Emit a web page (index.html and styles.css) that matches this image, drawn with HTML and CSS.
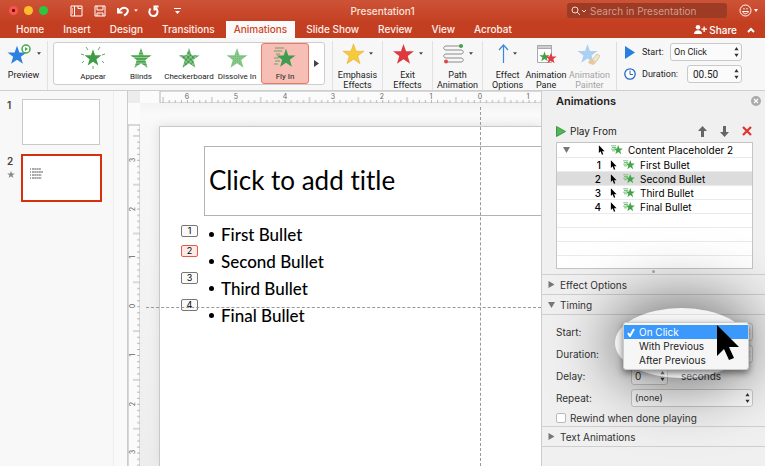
FILE: index.html
```html
<!DOCTYPE html>
<html lang="en">
<head>
<meta charset="utf-8">
<title>Presentation1</title>
<link rel="stylesheet" href="styles.css">
</head>
<body>
<svg class="defs" aria-hidden="true">
  <defs>
    <pattern id="stripes" width="24" height="3" patternUnits="userSpaceOnUse"><rect width="24" height="2" fill="#48a54c"/></pattern>
    <pattern id="checks" width="5" height="5" patternUnits="userSpaceOnUse"><rect width="5" height="5" fill="#8fc892"/><path d="M0 0h2.5v2.5H0zM2.5 2.5H5V5H2.5z" fill="#3c9a43"/></pattern>
    <pattern id="dots" width="2" height="2" patternUnits="userSpaceOnUse"><rect width="2" height="2" fill="#8ccb8f"/><path d="M0 0h1v1H0z" fill="#62b267"/></pattern>
    <symbol id="star" viewBox="0 0 24 24"><path d="M12 1l2.8 8h8.6l-6.8 5.200 2.500 8.300-7.100-4.900-7.100 4.900 2.500-8.300L.6 9h8.600z"/></symbol>
    <symbol id="updown" viewBox="0 0 6 14"><path d="M3 1l2.500 4h-5zM3 13L.5 9h5z"/></symbol>
    <symbol id="caret" viewBox="0 0 6 4"><path d="M0 0h6L3 4z"/></symbol>
    <symbol id="pointer" viewBox="0 0 8 11"><path d="M1 0v9l2-2 1.500 4L6 10.300 4.600 7H7.500z"/></symbol>
    <symbol id="fly" viewBox="0 0 14 12"><path d="M8.500 0l1.500 4.200h4l-3.200 2.600 1.200 4.200L8.500 8.500 5 11l1.200-4.200L3 4.200h4z"/><path d="M0 1h6M1 3h5M0 5h4M1 7h4" stroke="#79c07d" stroke-width="1.200" fill="none"/></symbol>
  </defs>
</svg>

<header class="top">
  <div class="titlebar">
    <div class="lights">
      <button class="light red" aria-label="Close"></button>
      <button class="light yellow" aria-label="Minimize"></button>
      <button class="light green" aria-label="Zoom"></button>
    </div>
    <div class="quick">
      <button aria-label="Layout"><svg width="13" height="12" viewBox="0 0 13 12"><path d="M1 1h11v10H1zM4.500 1v10M8 1v2.500h3.500M2 4h1M2 6h1M2 8h1"/></svg></button>
      <button aria-label="Save"><svg width="12" height="12" viewBox="0 0 12 12"><path d="M1 1h10v10H1zM3 1v4h6V1M3 11V8h6v3M4.500 10h1"/></svg></button>
      <button aria-label="Undo"><svg width="12" height="12" viewBox="0 0 12 12"><path class="thick" d="M1 3v4.500h4.500M1.500 7C4 3 7 2 9.500 3.500s1.500 5-2.500 7"/></svg></button>
      <button class="undo-more" aria-label="Undo options"><svg class="solid" width="4" height="3" viewBox="0 0 6 4"><use href="#caret"/></svg></button>
      <button aria-label="Repeat"><svg width="11" height="12" viewBox="0 0 11 12"><path class="thick" d="M2.500 3.500C0 7 2 11 5.500 11S11 6.500 8 3M10.500 1.500H6.500v4"/></svg></button>
      <button class="customize" aria-label="Customize toolbar"><svg class="solid" width="7" height="8" viewBox="0 0 7 8"><path d="M0 1h7v1H0zM1 4h5L3.500 7z"/></svg></button>
    </div>
    <h1>Presentation1</h1>
    <div class="title-right">
      <label class="search">
        <svg width="16" height="10" viewBox="0 0 16 10"><circle cx="4" cy="4" r="3"/><path d="M6.200 6.200L9 9M11 4l2 2 2-2"/></svg>
        <input type="text" placeholder="Search in Presentation" aria-label="Search in Presentation">
      </label>
      <button class="smile" aria-label="Feedback"><svg width="20" height="13" viewBox="0 0 20 13"><circle cx="6.500" cy="6.500" r="5.500"/><path d="M3.500 7.500c1 3 5 3 6 0zM5 4v1.500M8 4v1.500"/><path class="fillw" d="M15 5h4l-2 3z"/></svg></button>
    </div>
  </div>
  <nav class="tabs">
    <a href="#">Home</a><a href="#">Insert</a><a href="#">Design</a><a href="#">Transitions</a><a href="#" class="active">Animations</a><a href="#">Slide Show</a><a href="#">Review</a><a href="#">View</a><a href="#">Acrobat</a>
    <div class="share">
      <button><svg width="13" height="9" viewBox="0 0 13 9"><circle cx="4" cy="2.300" r="2.300"/><path d="M0 9c0-5 8-5 8 0zM9.500 1.500h1.300v2H13v1.300h-2.200v2.200H9.500V4.800H7.500V3.500h2z"/></svg>Share</button>
      <button aria-label="Collapse ribbon"><svg class="chev" width="8" height="6" viewBox="0 0 8 6"><path d="M1 5l3-3 3 3"/></svg></button>
    </div>
  </nav>
</header>

<section class="ribbon">
  <div class="group preview">
    <button class="tool">
      <span class="pic"><svg width="26" height="22" viewBox="0 0 26 22"><use href="#star" x="0" y="2" width="20" height="20" fill="#2c80df"/><circle cx="19" cy="6" r="4" fill="#fff" stroke="#45a845" stroke-width="1.500"/><path d="M18 4l3 2-3 2z" fill="#45a845"/></svg><svg class="dd" width="4" height="3"><use href="#caret"/></svg></span>
      <span>Preview</span>
    </button>
  </div>
  <div class="gallery">
    <div class="effects">
      <button class="effect"><svg width="24" height="24" viewBox="0 0 24 24"><use href="#star" x="3" y="2" width="18" height="19" fill="#3f9c46"/><path d="M7 4L5 1M17 4l2-3M3 9L0 8M21 9l3-1M3 15l-2 2M21 15l2 2M12 20v3" stroke="#58ad5d" fill="none"/></svg>Appear</button>
      <button class="effect"><svg width="22" height="24" viewBox="0 0 22 24"><use href="#star" x="0" y="1" width="22" height="22" fill="#9bce9e"/><use href="#star" x="0" y="1" width="22" height="22" fill="url(#stripes)"/></svg>Blinds</button>
      <button class="effect"><svg width="22" height="24" viewBox="0 0 22 24"><use href="#star" x="0" y="1" width="22" height="22" fill="url(#checks)"/></svg>Checkerboard</button>
      <button class="effect"><svg width="22" height="24" viewBox="0 0 22 24"><use href="#star" x="0" y="1" width="22" height="22" fill="url(#dots)"/></svg>Dissolve In</button>
      <button class="effect chosen"><svg width="22" height="24" viewBox="0 0 22 24"><use href="#star" x="2" y="1" width="20" height="22" fill="#3f9c50"/><path d="M1 2h9M0 5h8M2 8h4M0 12h5M1 15h5M0 18h4" stroke="#6f9f68" fill="none"/></svg>Fly In</button>
    </div>
    <button class="more" aria-label="More effects"><svg width="5" height="7" viewBox="0 0 5 7"><path d="M0 0l5 3.500L0 7z"/></svg></button>
  </div>
  <div class="group">
    <button class="tool"><span class="pic"><svg width="23" height="22" viewBox="0 0 24 24"><use href="#star" fill="#f7ca3c" stroke="#dfac27" stroke-width=".6"/></svg><svg class="dd" width="4" height="3"><use href="#caret"/></svg></span><span>Emphasis<br>Effects</span></button>
  </div>
  <div class="group">
    <button class="tool"><span class="pic"><svg width="23" height="22" viewBox="0 0 24 24"><use href="#star" fill="#dd3a3f"/></svg><svg class="dd" width="4" height="3"><use href="#caret"/></svg></span><span>Exit<br>Effects</span></button>
  </div>
  <div class="group">
    <button class="tool"><span class="pic"><svg width="22" height="20" viewBox="0 0 22 20"><path d="M18 2H3c-3 0-3 4 0 4h15c3 0 3 4 0 4H3c-3 0-3 4 0 4h15c3 0 3 4 0 4H3" fill="none" stroke="#8b8b8b"/><circle cx="18" cy="2" r="2" fill="#43a047"/><circle cx="3" cy="17.500" r="2" fill="#e04848"/></svg><svg class="dd" width="4" height="3"><use href="#caret"/></svg></span><span>Path<br>Animation</span></button>
  </div>
  <div class="group triple">
    <button class="tool"><span class="pic"><svg width="11" height="20" viewBox="0 0 11 20"><path d="M5.500 19V1M1 6l4.500-5L10 6" fill="none" stroke="#3b87dd" stroke-width="1.200"/></svg><svg class="dd" width="4" height="3"><use href="#caret"/></svg></span><span>Effect<br>Options</span></button>
    <button class="tool"><span class="pic"><svg width="21" height="22" viewBox="0 0 21 22"><path d="M1.500 2.500h14v17h-14z" fill="#fff" stroke="#aaa"/><path d="M1.500 2.500h14v3h-14z" fill="#ccc" stroke="#aaa"/><use href="#star" x="3" y="8" width="11" height="11" fill="#43a047"/><use href="#star" x="9" y="9" width="12" height="12" fill="#df3c43"/></svg></span><span>Animation<br>Pane</span></button>
    <button class="tool" disabled><span class="pic"><svg width="24" height="22" viewBox="0 0 24 22"><use href="#star" x="0" y="0" width="21" height="21" fill="#acd0f2"/><path d="M15 17l5-6 3 2-4 6z" fill="#f3e6cc" stroke="#d5c8b0"/><path d="M13 16l6 4-3 2-5-2z" fill="#e9c89a"/></svg></span><span>Animation<br>Painter</span></button>
  </div>
  <form class="timing-mini">
    <label for="rstart"><svg width="12" height="13" viewBox="0 0 12 13"><path d="M1 0l10 6.500L1 13z" fill="#287fe0"/></svg>Start:</label>
    <span class="pick wide"><select id="rstart"><option>On Click</option></select><svg class="ud" width="5" height="12"><use href="#updown"/></svg></span>
    <label for="rdur"><svg width="12" height="12" viewBox="0 0 12 12"><circle cx="6" cy="6" r="5.200" fill="#fff" stroke="#246bb9" stroke-width="1.300"/><path d="M6 2.500V6.500h3" fill="none" stroke="#246bb9"/></svg>Duration:</label>
    <span class="pick spin"><input id="rdur" type="text" value="00.50"><svg class="ud" width="5" height="12"><use href="#updown"/></svg></span>
  </form>
</section>

<main class="work">
  <aside class="thumbs">
    <ol>
      <li><span class="num">1</span><button class="thumb" aria-label="Slide 1"></button></li>
      <li><span class="num">2<svg width="8" height="9" viewBox="0 0 24 24"><use href="#star"/></svg></span><button class="thumb current" aria-label="Slide 2"><svg width="14" height="14" viewBox="0 0 14 14"><path d="M2 2h9M2 5h11M2 8h9.500M2 11h9.500"/><path class="b" d="M0 2h1M0 5h1M0 8h1M0 11h1"/></svg></button></li>
    </ol>
  </aside>

  <section class="editor">
    <div class="corner"></div>
    <svg class="ruler-h" role="img" aria-label="Horizontal ruler">
      <defs><pattern id="th" x="47" width="48.800" height="12" patternUnits="userSpaceOnUse"><path d="M.5 9v3M6.600 9v3M12.700 9v3M18.800 9v3M24.900 6v6M31 9v3M37.100 9v3M43.200 9v3"/></pattern></defs>
      <rect x="20" width="100%" height="12" fill="url(#th)"/>
      <g><text x="47" y="8">6</text><text x="96" y="8">5</text><text x="145" y="8">4</text><text x="193" y="8">3</text><text x="242" y="8">2</text><text x="291" y="8">1</text><text x="340" y="8">0</text><text x="388" y="8">1</text></g>
    </svg>
    <svg class="ruler-v" role="img" aria-label="Vertical ruler">
      <defs><pattern id="tv" y="8" width="12" height="48.800" patternUnits="userSpaceOnUse"><path d="M9 .5h3M9 6.600h3M9 12.700h3M9 18.800h3M5 24.900h7M9 31h3M9 37.100h3M9 43.200h3"/></pattern></defs>
      <rect y="22" width="12" height="100%" fill="url(#tv)"/>
      <g><text transform="translate(7 57) rotate(-90)">3</text><text transform="translate(7 106) rotate(-90)">2</text><text transform="translate(7 154) rotate(-90)">1</text><text transform="translate(7 203) rotate(-90)">0</text><text transform="translate(7 252) rotate(-90)">1</text><text transform="translate(7 301) rotate(-90)">2</text><text transform="translate(7 349) rotate(-90)">3</text></g>
    </svg>
    <div class="canvas">
      <article class="slide">
        <h2>Click to add title</h2>
        <div class="body">
          <ol class="tags"><li>1</li><li class="on">2</li><li>3</li><li>4</li></ol>
          <ul class="bullets"><li>First Bullet</li><li>Second Bullet</li><li>Third Bullet</li><li>Final Bullet</li></ul>
        </div>
      </article>
      <div class="guide-h"></div>
      <div class="guide-v"></div>
    </div>
  </section>

  <aside class="pane">
    <div class="pane-head"><h2>Animations</h2><button aria-label="Close pane"><svg width="10" height="10" viewBox="0 0 10 10"><circle cx="5" cy="5" r="5" fill="#aaa"/><path d="M3 3l4 4M7 3L3 7" stroke="#fff" stroke-width="1.200"/></svg></button></div>
    <div class="play">
      <button><svg width="10" height="11" viewBox="0 0 10 11"><path d="M.5.5l9 5-9 5z" fill="#55b558" stroke="#3a9a40"/></svg>Play From</button>
      <div class="acts">
        <button aria-label="Move up"><svg width="9" height="11" viewBox="0 0 9 11"><path d="M4.500 0L9 5H6v6H3V5H0z" fill="#666"/></svg></button>
        <button aria-label="Move down"><svg width="9" height="11" viewBox="0 0 9 11"><path d="M4.500 11L9 6H6V0H3v6H0z" fill="#666"/></svg></button>
        <button aria-label="Delete"><svg width="10" height="10" viewBox="0 0 10 10"><path d="M1 1l8 8M9 1L1 9" stroke="#dc3430" stroke-width="2.200"/></svg></button>
      </div>
    </div>
    <ul class="tree">
      <li class="parent"><svg class="tri" width="7" height="6" viewBox="0 0 7 6"><path d="M0 0h7L3.500 6z"/></svg><svg class="ptr" width="7" height="10"><use href="#pointer"/></svg><svg class="fly" width="12" height="10"><use href="#fly"/></svg>Content Placeholder 2</li>
      <li><b>1</b><svg class="ptr" width="7" height="10"><use href="#pointer"/></svg><svg class="fly" width="12" height="10"><use href="#fly"/></svg>First Bullet</li>
      <li class="sel"><b>2</b><svg class="ptr" width="7" height="10"><use href="#pointer"/></svg><svg class="fly" width="12" height="10"><use href="#fly"/></svg>Second Bullet</li>
      <li><b>3</b><svg class="ptr" width="7" height="10"><use href="#pointer"/></svg><svg class="fly" width="12" height="10"><use href="#fly"/></svg>Third Bullet</li>
      <li><b>4</b><svg class="ptr" width="7" height="10"><use href="#pointer"/></svg><svg class="fly" width="12" height="10"><use href="#fly"/></svg>Final Bullet</li>
      <li></li><li></li><li></li><li></li>
    </ul>
    <div class="grip"></div>
    <button class="section"><svg width="6" height="7" viewBox="0 0 6 7"><path d="M0 0l6 3.500L0 7z"/></svg>Effect Options</button>
    <button class="section"><svg width="7" height="6" viewBox="0 0 7 6"><path d="M0 0h7L3.500 6z"/></svg>Timing</button>
    <form class="fields">
      <label for="start">Start:</label>
      <div class="cell">
        <span class="pick"><select id="start"><option>On Click</option></select><svg class="ud" width="5" height="12"><use href="#updown"/></svg></span>
        <div class="spot"></div>
        <ul class="menu" role="listbox">
          <li role="option" aria-selected="true"><svg width="8" height="9" viewBox="0 0 8 9"><path d="M1 5l2 3 4-7"/></svg>On Click</li>
          <li role="option">With Previous</li>
          <li role="option">After Previous</li>
        </ul>
        <svg class="cursor" width="24" height="38" viewBox="0 0 24 38"><path d="M1 1v31l7-7 5 11 5-2-5-11h10z"/></svg>
      </div>
      <label for="dur">Duration:</label>
      <div class="cell"><span class="pick"><select id="dur"><option>0.5 seconds (Fast)</option></select><svg class="ud" width="5" height="12"><use href="#updown"/></svg></span></div>
      <label for="delay">Delay:</label>
      <div class="cell"><span class="pick small"><input id="delay" type="text" value="0"><svg class="ud" width="5" height="12"><use href="#updown"/></svg></span><span>seconds</span></div>
      <label for="repeat">Repeat:</label>
      <div class="cell"><span class="pick none"><select id="repeat"><option>(none)</option></select><svg class="ud" width="5" height="12"><use href="#updown"/></svg></span></div>
      <label class="rewind"><input type="checkbox">Rewind when done playing</label>
    </form>
    <button class="section last"><svg width="6" height="7" viewBox="0 0 6 7"><path d="M0 0l6 3.500L0 7z"/></svg>Text Animations</button>
  </aside>
</main>
</body>
</html>
```
FILE: styles.css
```css
* { box-sizing: border-box; }
body {
  margin: 0;
  height: 100vh;
  display: flex;
  flex-direction: column;
  overflow: hidden;
  background: #f0f0f0;
  color: #222;
  font: 10px/14px Inter, "Liberation Sans", sans-serif;
}
h1, h2, ul, ol { margin: 0; padding: 0; font-weight: inherit; }
ul, ol { list-style: none; }
button, input, select { font: inherit; color: inherit; }
button { display: flex; align-items: center; border: 0; padding: 0; background: none; white-space: nowrap; }
svg { flex: none; display: block; }
.defs { position: absolute; width: 0; height: 0; }

/* Title bar and tabs */
.top { flex: none; background: linear-gradient(#cd5337, #c43f22 60%, #c23e21); color: #fff; }
.titlebar { height: 21px; display: grid; grid-template-columns: 1fr auto 1fr; align-items: center; grid-template-areas: "left title right"; }
.lights, .quick { grid-area: left; display: flex; align-items: center; }
.lights { padding-left: 9px; gap: 6px; }
.light { width: 9px; height: 9px; border-radius: 50%; }
.red { background: radial-gradient(circle, #5b0b0b 1px, #fa544e 2px); }
.yellow { background: #fdbb2e; }
.green { background: #2bc740; }
.quick { padding-left: 70px; gap: 11px; }
.quick svg { fill: none; stroke: #fff; }
.quick .thick { stroke-width: 2; }
.quick .solid { fill: #fff; stroke: none; }
.undo-more { margin: 0 -1px 0 -6px; }
.customize { margin-left: 4px; }
.titlebar h1 { grid-area: title; font-size: 10px; font-weight: 500; color: #fbe3dc; }
.title-right { grid-area: right; display: flex; justify-content: flex-end; align-items: center; gap: 12px; padding: 0 6px 0 0; }
.search { flex: 0 1 160px; height: 15px; display: flex; align-items: center; gap: 3px; padding: 0 4px; border-radius: 3px; background: #9d3b24; }
.search svg { fill: none; stroke: #f8dcd4; }
.search input { min-width: 0; width: 100%; border: 0; padding: 0; background: none; outline: 0; }
.search input::placeholder { color: #d49a8b; opacity: 1; }
.smile svg { fill: none; stroke: #fff; }
.smile .fillw { fill: #fff; stroke: none; }
.tabs { display: flex; height: 17px; padding-left: 7px; font-weight: 500; }
.tabs a { margin: 0 2px 0 1px; padding: 0 8px; line-height: 16px; color: #fdeee9; text-decoration: none; white-space: nowrap; }
.tabs .active { background: #fafafa; color: #cc4524; }
.share { margin-left: auto; display: flex; gap: 10px; padding-right: 10px; }
.share svg { fill: #fff; margin-right: 2px; }
.share .chev { fill: none; stroke: #fff; stroke-width: 2; margin: 0; }

/* Ribbon */
.ribbon { flex: none; display: flex; height: 53px; padding: 4px 0 0; background: #f7f7f7; border-bottom: 1px solid #cfcfcf; font: 9px/10px Roboto, sans-serif; }
.group { flex: 0 0 50px; display: flex; justify-content: center; margin: -1px 0 0; border-left: 1px solid #e1e1e1; }
.group.preview { flex-basis: 48px; border: 0; border-right: 1px solid #e1e1e1; }
.group.triple { flex-basis: 134px; justify-content: space-between; padding: 0 6px 0 9px; }
.tool { flex-direction: column; color: #222; }
.tool:disabled { color: #a3a3a3; }
.pic { height: 25px; display: flex; align-items: center; justify-content: center; gap: 4px; margin-bottom: 4px; }
.pic .dd { fill: #444; }
.gallery { flex: 0 0 272px; height: 43px; display: flex; margin: 0 7px 0 5px; border: 1px solid #cdcdcd; border-radius: 3px; background: #fff; }
.effects { flex: 1; display: flex; padding-left: 15px; }
.effect { flex: 0 0 48px; min-width: 0; flex-direction: column; justify-content: space-between; padding: 3px 0; margin: 0; font-size: 8px; line-height: 9px; }
.chosen { background: #f6beb4; border: 1px solid #ee7760; border-radius: 3px; padding: 2px 0; }
.more { padding: 0 5px; fill: #444; }
.timing-mini { flex: 1; display: grid; grid-template-columns: 38px 1fr; gap: 4px 8px; padding: 1px 23px 0 7px; border-left: 1px solid #dedede; align-content: start; }
.timing-mini label { display: flex; align-items: center; gap: 6px; white-space: nowrap; }
.pick { position: relative; display: flex; flex: 1; min-width: 0; }
.pick select, .pick input { appearance: none; width: 100%; min-width: 0; height: 18px; margin: 0; padding: 0 3px; border: 1px solid #c9c9c9; border-radius: 3px; background: #fbfbfb; }
.pick .ud { position: absolute; right: 3px; top: 3px; fill: #333; }
.spin { margin-left: 17px; }
.spin input { font-size: 10px; padding: 0 5px; }

/* Workspace */
.work { flex: 1; min-height: 0; display: flex; }
.thumbs { flex: 0 0 128px; padding: 7px 0 0 7px; background: linear-gradient(90deg, #f8f8f8 113px, #ededed 113px, #ededed 114px, #f9f9f9 114px); border-right: 1px solid #ccc; }
.thumbs ol { display: grid; gap: 8px; }
.thumbs li { display: flex; gap: 6px; }
.num { width: 8px; font-weight: 600; color: #444; }
.num svg { fill: #888; margin-top: 2px; }
.thumb { width: 78px; height: 46px; margin: 1px; border: 1px solid #c9c9c9; background: #fff; align-items: flex-start; }
.thumb.current { margin: 0; width: 81px; height: 48px; border: 2px solid #d6300f; padding: 11px 7px; }
.thumb svg { fill: none; stroke: #555; stroke-dasharray: 2 .3; }
.editor { flex: 1; min-width: 0; display: grid; grid-template: 12px 1fr / 12px 1fr; overflow: hidden; background: #f1f1f1; }
.corner { background: #ececec; }
.ruler-h, .ruler-v { width: 100%; height: 100%; background: #fbfbfb; stroke: #b5b5b5; }
.ruler-h text, .ruler-v text { fill: #666; stroke: none; font-size: 7px; text-anchor: middle; }
.canvas { position: relative; overflow: hidden; padding: 23px 0 0 19px; display: flex; background: linear-gradient(#f3f3f3, #fafafa 12px, #f8f8f8 22px, #ededed); }
.slide { flex: 1; background: #fff; border: 1px solid #c8c8c8; border-right: 0; border-bottom: 0; box-shadow: 0 0 10px #ddd; color: #000; }
.slide h2 { margin: 19px 0 0 44px; height: 70px; padding: 0 4px; border: 1px solid #b2b2b2; border-right: 0; font: 26px/66px Lato, sans-serif; font-variant-ligatures: none; }
.body { display: flex; gap: 11px; padding: 9px 0 0 21px; }
.tags { display: grid; gap: 15px; align-content: start; }
.tags li { width: 17px; height: 12px; border: 1px solid #777; border-radius: 2px; background: #fafafa; text-align: center; font-size: 9px; line-height: 10px; }
.tags li:first-child { margin-bottom: -7px; }
.tags .on { border-color: #e25b45; background: #fdeae6; }
.bullets { font: 500 17px/27px Lato, sans-serif; margin-top: -4px; }
.bullets li { display: flex; align-items: center; gap: 7px; }
.bullets li::before { content: ""; width: 5px; height: 5px; border-radius: 50%; background: #000; }
.guide-h { position: absolute; left: 6px; right: 0; top: 204px; border-top: 1px dashed #999; }
.guide-v { position: absolute; left: 340px; top: 4px; bottom: 0; border-left: 1px dashed #999; }

/* Animations pane */
.pane { position: relative; flex: 0 0 224px; overflow: hidden; border-left: 1px solid #ccc; background: #f0f0f0; display: flex; flex-direction: column; }
.pane-head { display: flex; justify-content: space-between; padding: 2px 4px 0 14px; }
.pane-head h2 { font-size: 11px; line-height: 16px; font-weight: 600; }
.play { display: flex; justify-content: space-between; padding: 13px 13px 2px 14px; line-height: 18px; }
.play button { gap: 4px; }
.acts { display: flex; gap: 13px; }
.tree { flex: none; height: 127px; margin: 0 12px 0 14px; border: 1px solid #c4c4c4; background: #fff; overflow: hidden; color: #000; }
.tree li { height: 14px; display: flex; align-items: center; border-bottom: 1px solid #eaeaea; white-space: nowrap; }
.tree li.parent { height: 15px; }
.tree .sel { background: #dcdcdc; }
.tree b { width: 44px; text-align: right; font-weight: 500; margin-right: 9px; }
.ptr { margin-right: 6px; }
.fly { margin-right: 5px; fill: #42a548; }
.tri { margin: 0 28px 0 6px; fill: #777; }
.grip { flex: none; width: 3px; height: 3px; margin: 1px auto; border-radius: 50%; background: #aaa; }
.section { flex: none; height: 20px; padding-left: 6px; gap: 5px; border-top: 1px solid #cfcfcf; color: #333; }
.section svg { fill: #777; width: 7px; }
.section.last { border-bottom: 1px solid #cfcfcf; height: 21px; }
.fields { display: grid; grid-template: repeat(4, 18px) 15px / 67px 1fr; gap: 4px 8px; align-items: center; padding: 8px 12px 0 14px; border-top: 1px solid #cfcfcf; color: #333; }
.cell { position: relative; display: flex; align-items: center; gap: 13px; }
.pick.small { flex: 0 0 37px; }
.pick.none select { font-size: 9px; }
.rewind { grid-column: 1 / -1; align-self: start; height: 14px; display: flex; align-items: center; gap: 4px; white-space: nowrap; }
.rewind input { appearance: none; width: 10px; height: 10px; margin: 0; border: 1px solid #bbb; border-radius: 2px; background: #fff; }
.spot { position: absolute; z-index: 2; left: -16px; top: -15px; width: 133px; height: 70px; border-radius: 50%; box-shadow: 0 0 64px 6px rgba(0, 0, 0, .6); background: rgba(255, 255, 255, .3); pointer-events: none; }
.menu { position: absolute; z-index: 3; left: -8px; top: -1px; width: 126px; padding: 2px 0; background: #f6f6f6; border: 1px solid #ccc; border-radius: 3px; box-shadow: 0 3px 7px rgba(0, 0, 0, .5); color: #222; }
.menu li { padding-left: 15px; }
.menu li[aria-selected] { display: flex; align-items: center; gap: 4px; padding-left: 3px; background: #3b99fc; color: #fff; }
.menu li svg { fill: none; stroke: #fff; stroke-width: 2; }
.cursor { position: absolute; z-index: 4; left: 85px; top: 1px; }
```
